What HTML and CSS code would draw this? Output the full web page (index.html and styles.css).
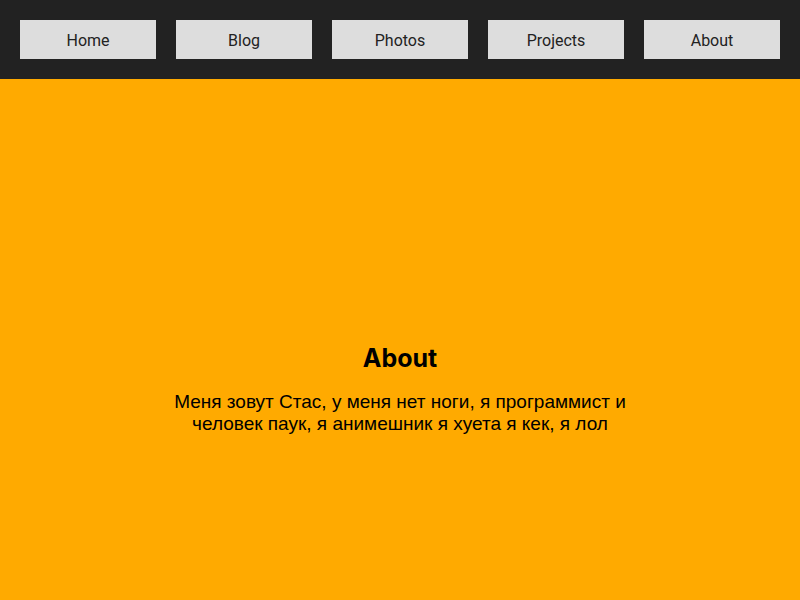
FILE: index.html
```html
<!DOCTYPE html>
<html lang="ru">
<head>
<meta charset="utf-8">
<meta name="viewport" content="width=device-width, initial-scale=1">
<title>About</title>
<link rel="stylesheet" href="styles.css">
</head>
<body>
<nav class="nav">
<a class="nav-link" href="#home">Home</a>
<a class="nav-link" href="#blog">Blog</a>
<a class="nav-link" href="#photos">Photos</a>
<a class="nav-link" href="#projects">Projects</a>
<a class="nav-link" href="#about">About</a>
</nav>
<main class="about" id="about">
<h1 class="about-title">About</h1>
<p class="about-text">Меня зовут Стас, у меня нет ноги, я программист и человек паук, я анимешник я хуета я кек, я лол</p>
</main>
</body>
</html>
```
FILE: styles.css
```css
* {
  box-sizing: border-box;
}

body {
  margin: 0;
  min-height: 100vh;
  display: flex;
  flex-direction: column;
  background: #ffaa00;
  color: #000;
  font-family: Inter, "Liberation Sans", sans-serif;
}

.nav {
  display: flex;
  gap: 20px;
  padding: 20px;
  background: #222;
}

.nav-link {
  flex: 1;
  padding: 11px 10px 9px;
  background: #ddd;
  color: #222;
  font-family: Roboto, sans-serif;
  font-size: 16px;
  line-height: 19px;
  text-align: center;
  text-decoration: none;
}

.about {
  flex: 1;
  display: flex;
  flex-direction: column;
  align-items: center;
  justify-content: center;
  gap: 18px;
  padding: 98px 20px 0;
  text-align: center;
}

.about-title {
  margin: 0;
  font-size: 25px;
  line-height: 30px;
}

.about-text {
  margin: 0;
  max-width: 460px;
  font-family: "Liberation Sans", Arial, sans-serif;
  font-size: 19px;
  line-height: 22px;
}
```
